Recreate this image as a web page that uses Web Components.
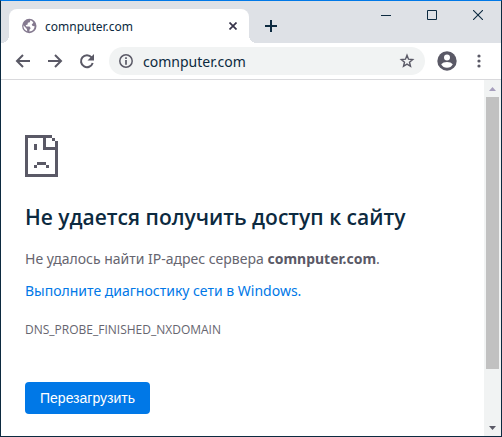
<!DOCTYPE html>
<html lang="ru">
<head>
<meta charset="utf-8">
<meta name="viewport" content="width=device-width, initial-scale=1">
<title>comnputer.com</title>
<style>
    :root {
        --accent: #0078e7;
        --ink: #0c2a40;
        --icon: #5a5966;
        --strip: #dee1e6;
        --field: #f1f3f3;
    }
    body {
        margin: 0;
        font-family: "Noto Sans", "Open Sans", sans-serif;
        color: var(--ink);
    }
    .name {
        color: var(--icon);
    }
</style>
</head>
<body>
<browser-window>
    <tab-strip slot="tabs">
        <browser-tab>comnputer.com</browser-tab>
    </tab-strip>
    <tool-bar slot="toolbar" address="comnputer.com"></tool-bar>
    <error-page>
        <span slot="title">Не удается получить доступ к сайту</span>
        <span slot="message">Не удалось найти IP-адрес сервера <strong class="name">comnputer.com</strong>.</span>
        <span slot="link">Выполните диагностику сети в Windows.</span>
        <span slot="code">DNS_PROBE_FINISHED_NXDOMAIN</span>
        <span slot="action">Перезагрузить</span>
    </error-page>
    <scroll-bar slot="scroll"></scroll-bar>
</browser-window>

<script>
const buttonReset = `
    button {
        display: flex;
        align-items: center;
        justify-content: center;
        margin: 0;
        padding: 0;
        border: none;
        background: none;
        color: inherit;
        cursor: pointer;
    }
    svg {
        display: block;
    }
`;

function render(host, html) {
    const shadow = host.attachShadow({ mode: 'open' });
    const template = document.createElement('template');
    template.innerHTML = html;
    shadow.appendChild(template.content.cloneNode(true));
    return shadow;
}

class BrowserWindow extends HTMLElement {
    constructor() {
        super();
        render(this, `
            <style>
                :host {
                    display: flex;
                    flex-direction: column;
                    box-sizing: border-box;
                    min-height: 100vh;
                    border: 1px solid var(--ink);
                    border-top-color: var(--accent);
                    background: #fff;
                }
                .view {
                    display: flex;
                    flex: 1;
                }
                main {
                    flex: 1;
                    min-width: 0;
                }
            </style>
            <slot name="tabs"></slot>
            <slot name="toolbar"></slot>
            <div class="view">
                <main><slot></slot></main>
                <slot name="scroll"></slot>
            </div>
        `);
    }
}

class TabStrip extends HTMLElement {
    constructor() {
        super();
        render(this, `
            <style>
                ${buttonReset}
                :host {
                    display: flex;
                    height: 42px;
                    padding-left: 8px;
                    background: var(--strip);
                }
                .tabs {
                    display: flex;
                    flex: 1;
                    align-items: flex-end;
                    min-width: 0;
                }
                .add {
                    width: 28px;
                    height: 34px;
                    margin-left: 8px;
                }
                .controls {
                    display: flex;
                    height: 28px;
                }
                .controls button {
                    width: 46px;
                }
            </style>
            <div class="tabs">
                <slot></slot>
                <button class="add" aria-label="Новая вкладка">
                    <svg width="12" height="12"><path d="M6 0v12M0 6h12" stroke="currentColor" stroke-width="2"/></svg>
                </button>
            </div>
            <div class="controls">
                <button aria-label="Свернуть">
                    <svg width="10" height="10"><path d="M0 5.5h10" stroke="currentColor"/></svg>
                </button>
                <button aria-label="Развернуть">
                    <svg width="10" height="10"><path d="M.5.5h9v9h-9z" fill="none" stroke="currentColor"/></svg>
                </button>
                <button aria-label="Закрыть">
                    <svg width="10" height="10"><path d="M0 0l10 10M10 0L0 10" stroke="currentColor" stroke-width="1.1"/></svg>
                </button>
            </div>
        `);
    }
}

class BrowserTab extends HTMLElement {
    constructor() {
        super();
        render(this, `
            <style>
                ${buttonReset}
                :host {
                    position: relative;
                    display: flex;
                    align-items: center;
                    flex: 0 1 240px;
                    box-sizing: border-box;
                    min-width: 0;
                    height: 34px;
                    padding: 0 8px 0 12px;
                    border-radius: 8px 8px 0 0;
                    background: #fff;
                    font-size: 12px;
                }
                /* feet that flare out into the toolbar */
                :host::before,
                :host::after {
                    content: "";
                    position: absolute;
                    bottom: 0;
                    width: 8px;
                    height: 8px;
                }
                :host::before {
                    right: 100%;
                    background: radial-gradient(circle at 0 0, transparent 8px, #fff 8px);
                }
                :host::after {
                    left: 100%;
                    background: radial-gradient(circle at 100% 0, transparent 8px, #fff 8px);
                }
                .title {
                    flex: 1;
                    min-width: 0;
                    margin-left: 8px;
                    overflow: hidden;
                    white-space: nowrap;
                }
                .close {
                    width: 16px;
                    height: 16px;
                }
            </style>
            <svg width="16" height="16" viewBox="0 0 16 16">
                <circle cx="8.300" cy="8" r="7.200" fill="#857a90"/>
                <path d="M9.300 2.300L8.800 4.200 6.800 4.800 6.600 6.600 4.600 7.200 5.400 8.400 8.600 8.500 9.700 10.200 8.600 11.500 8.300 13.600Q13.400 13.200 13.600 8.300L11.600 7.900 10.700 6.500 12.400 4.800Q11.200 2.600 9.300 2.300ZM2.400 7.300L5.200 10.200 6 11.200 6.200 13.300Q2.200 11.800 2.400 7.300Z" fill="#fff"/>
            </svg>
            <span class="title"><slot></slot></span>
            <button class="close" aria-label="Закрыть вкладку">
                <svg width="8" height="8"><path d="M.5.5l7 7M7.500.5l-7 7" stroke="#37344a" stroke-width="1.700"/></svg>
            </button>
        `);
    }
}

class ToolBar extends HTMLElement {
    constructor() {
        super();
        const shadow = render(this, `
            <style>
                ${buttonReset}
                :host {
                    display: flex;
                    align-items: center;
                    height: 36px;
                    padding: 0 6px;
                    border-bottom: 1px solid #d9d9dc;
                    color: var(--icon);
                }
                button {
                    flex: none;
                    width: 32px;
                    height: 28px;
                }
                form {
                    display: flex;
                    flex: 1;
                    align-items: center;
                    min-width: 0;
                    height: 28px;
                    margin: 0 6px;
                    border-radius: 14px;
                    background: var(--field);
                }
                .info {
                    width: 34px;
                }
                .star {
                    width: 36px;
                }
                input {
                    flex: 1;
                    min-width: 0;
                    padding: 0;
                    border: none;
                    outline: none;
                    background: none;
                    color: var(--ink);
                    font: inherit;
                    font-size: 14px;
                }
            </style>
            <button aria-label="Назад">
                <svg width="16" height="16" fill="none" stroke="currentColor" stroke-width="2"><path d="M15 8H2.500M8 2L2 8l6 6"/></svg>
            </button>
            <button aria-label="Вперед">
                <svg width="16" height="16" fill="none" stroke="currentColor" stroke-width="2"><path d="M1 8h12.500M8 2l6 6-6 6"/></svg>
            </button>
            <button aria-label="Обновить">
                <svg width="16" height="16"><path d="M12.600 4.300A6 6 0 1 0 13.700 10" fill="none" stroke="currentColor" stroke-width="2"/><path d="M15 1v6.500H8.500z" fill="currentColor"/></svg>
            </button>
            <form>
                <button type="button" class="info" aria-label="Сведения о сайте">
                    <svg width="14" height="14"><circle cx="7" cy="7" r="6.200" fill="none" stroke="currentColor" stroke-width="1.500"/><path d="M7 3.200v1.700M7 6v4.800" stroke="currentColor" stroke-width="1.700"/></svg>
                </button>
                <input type="text" aria-label="Адрес" spellcheck="false">
                <button type="button" class="star" aria-label="В закладки">
                    <svg width="16" height="16"><path d="M8 2.300l1.500 3.900 4.200.300-3.200 2.700 1 4.100L8 11.100l-3.500 2.200 1-4.100L2.300 6.500l4.200-.300z" fill="none" stroke="currentColor" stroke-width="1.400"/></svg>
                </button>
            </form>
            <button aria-label="Профиль">
                <svg width="20" height="20"><circle cx="10" cy="10" r="9.700" fill="currentColor"/><circle cx="10" cy="6.500" r="3" fill="#fff"/><path d="M4.200 13.300Q6 11 10 11t5.800 2.300Q14 16.800 10 16.800T4.200 13.300z" fill="#fff"/></svg>
            </button>
            <button aria-label="Меню">
                <svg width="4" height="14" fill="currentColor"><circle cx="2" cy="2" r="1.600"/><circle cx="2" cy="7" r="1.600"/><circle cx="2" cy="12" r="1.600"/></svg>
            </button>
        `);
        shadow.querySelector('input').value = this.getAttribute('address') || '';
        shadow.querySelector('form').addEventListener('submit', (event) => event.preventDefault());
    }
}

class ErrorPage extends HTMLElement {
    constructor() {
        super();
        render(this, `
            <style>
                :host {
                    display: block;
                    padding: 55px 24px 20px;
                    color: #66656f;
                }
                svg {
                    display: block;
                }
                h1 {
                    margin: 24px 0 14px;
                    color: var(--ink);
                    font-family: "Open Sans", sans-serif;
                    font-size: 21px;
                    font-weight: 600;
                    line-height: 32px;
                }
                p {
                    margin: 0 0 8px;
                    font-size: 14px;
                    line-height: 24px;
                }
                a {
                    color: var(--accent);
                    text-decoration: none;
                }
                .code {
                    margin: 15px 0 40px;
                    font-family: "Open Sans", sans-serif;
                    font-size: 12px;
                }
                button {
                    height: 32px;
                    padding: 0 15px;
                    border: none;
                    border-radius: 4px;
                    background: var(--accent);
                    color: #fff;
                    font: 14px "Liberation Sans", sans-serif;
                    cursor: pointer;
                }
            </style>
            <svg width="33" height="42" viewBox="0 0 11 14" fill="var(--icon)" shape-rendering="crispEdges">
                <path d="M0 0h9v1H7v3h3V2h1v12H0zM1 1v12h9V5H6V1zM9 1h1v1H9zM3 3h1v2H3zM4 9h3v1H4zM3 10h1v1H3zM7 10h1v1H7z" fill-rule="evenodd"/>
            </svg>
            <h1><slot name="title"></slot></h1>
            <p><slot name="message"></slot></p>
            <p><a href="#"><slot name="link"></slot></a></p>
            <p class="code"><slot name="code"></slot></p>
            <button type="button"><slot name="action"></slot></button>
        `);
    }
}

class ScrollBar extends HTMLElement {
    constructor() {
        super();
        render(this, `
            <style>
                ${buttonReset}
                :host {
                    display: flex;
                    flex-direction: column;
                    width: 17px;
                    background: var(--field);
                }
                button {
                    width: 17px;
                    height: 17px;
                }
                .track {
                    display: grid;
                    flex: 1;
                    grid-template-rows: 11fr 2fr;
                    padding: 0 2px;
                }
                .thumb {
                    background: #c1c1c1;
                }
            </style>
            <button aria-label="Вверх">
                <svg width="7" height="4"><path d="M0 4l3.500-4L7 4z" fill="#a79fbd"/></svg>
            </button>
            <div class="track"><div class="thumb"></div></div>
            <button aria-label="Вниз">
                <svg width="7" height="4"><path d="M0 0h7L3.500 4z" fill="#5a5966"/></svg>
            </button>
        `);
    }
}

customElements.define('browser-window', BrowserWindow);
customElements.define('tab-strip', TabStrip);
customElements.define('browser-tab', BrowserTab);
customElements.define('tool-bar', ToolBar);
customElements.define('error-page', ErrorPage);
customElements.define('scroll-bar', ScrollBar);
</script>
</body>
</html>
